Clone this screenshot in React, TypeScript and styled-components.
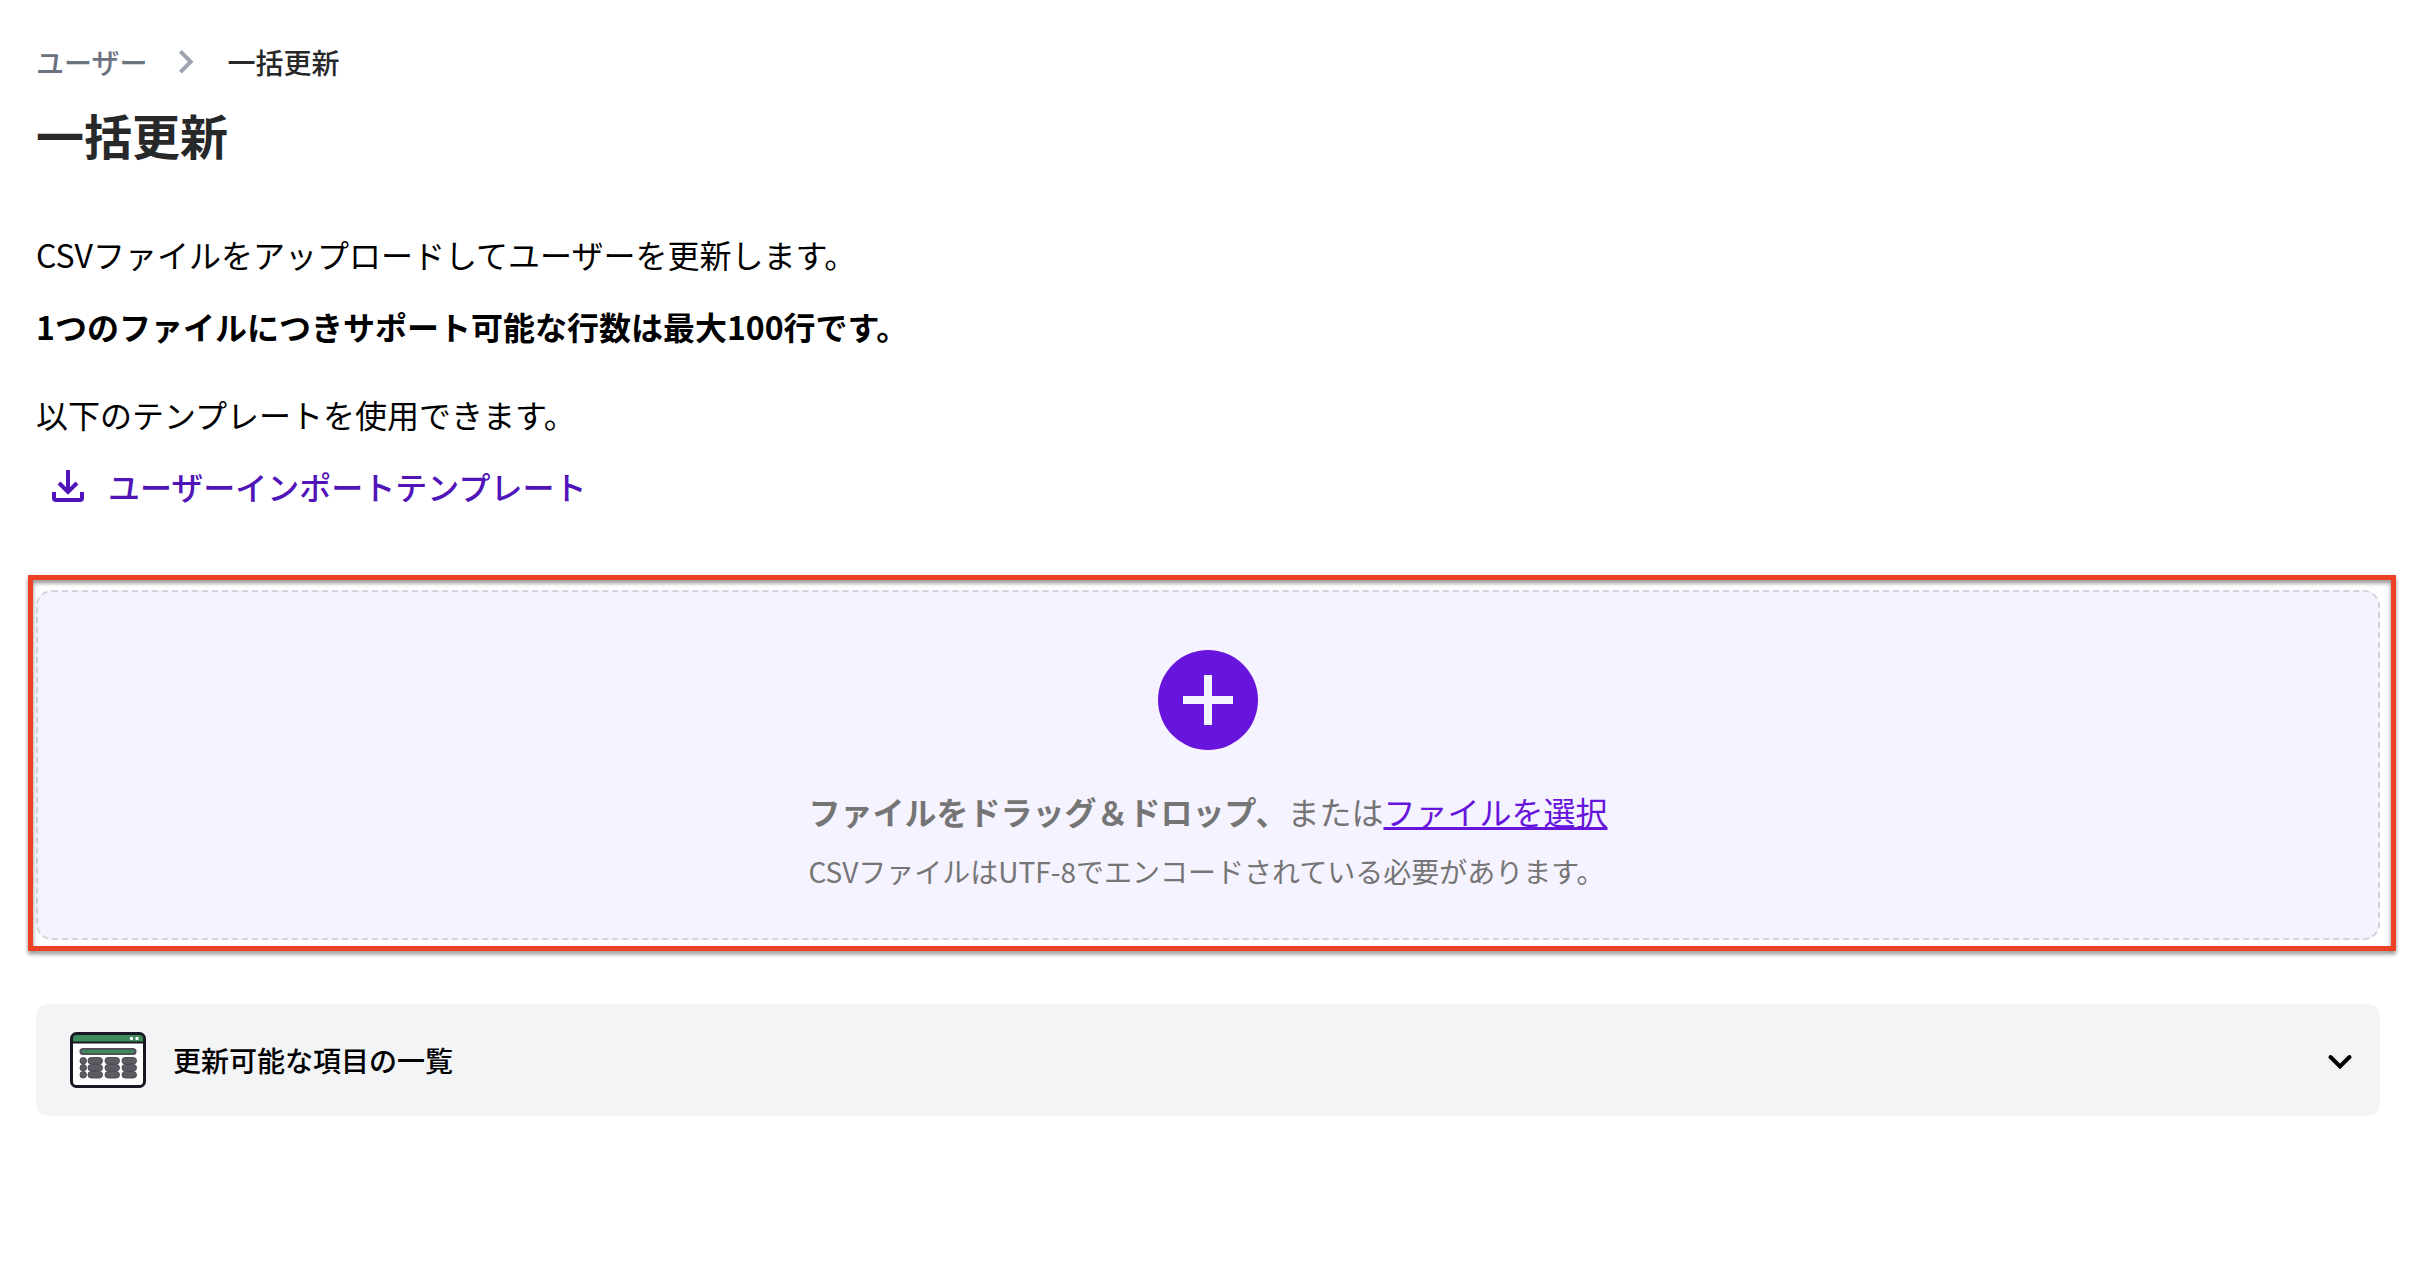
import React, { useState } from "react";
import styled, { createGlobalStyle } from "styled-components";

const GlobalStyle = createGlobalStyle`
  *, *::before, *::after { box-sizing: border-box; }
  body {
    margin: 0;
    background: #ffffff;
    color: #000000;
    font-family: "Noto Sans CJK JP", "Noto Sans", sans-serif;
    font-size: 32px;
    line-height: 48px;
  }
  h1, p, ol { margin: 0; padding: 0; }
`;

const Page = styled.main`
  display: flex;
  flex-direction: column;
  padding: 42px 38px 80px 36px;
`;

const Breadcrumbs = styled.ol`
  display: flex;
  align-items: center;
  list-style: none;
  font-size: 28px;
  line-height: 40px;
  font-weight: 500;
`;

const Crumb = styled.li`
  display: flex;
  align-items: center;
`;

const CrumbLink = styled.a`
  color: #6b7280;
  text-decoration: none;
`;

const CrumbCurrent = styled.span`
  color: #27282a;
`;

const CrumbChevron = styled.svg`
  width: 40px;
  height: 40px;
  margin: 0 20px;
  fill: none;
  stroke: #9ca3af;
  stroke-width: 4;
`;

const Title = styled.h1`
  margin-top: 20px;
  color: #27282a;
  font-size: 48px;
  line-height: 64px;
  font-weight: 700;
`;

const Intro = styled.section`
  display: flex;
  flex-direction: column;
  align-items: flex-start;
  gap: 24px;
  margin-top: 64px;
`;

const Limit = styled.p`
  margin-bottom: 16px;
  font-weight: 700;
`;

const TemplateLink = styled.a`
  display: flex;
  align-items: center;
  gap: 24px;
  padding-left: 16px;
  color: #5014b8;
  font-weight: 500;
  text-decoration: none;
`;

const DownloadIcon = styled.svg`
  width: 32px;
  height: 32px;
  fill: none;
  stroke: currentColor;
  stroke-width: 4;
`;

const UploadArea = styled.section`
  position: relative;
  margin-top: 80px;
`;

const Highlight = styled.div`
  position: absolute;
  inset: -15px -16px -11px -8px;
  border: 5px solid #ec4124;
  filter: drop-shadow(0 3px 2px rgba(0, 0, 0, 0.45));
  pointer-events: none;
`;

const DropZone = styled.div`
  display: flex;
  flex-direction: column;
  align-items: center;
  gap: 37px;
  padding: 58px 32px 47px;
  border: 2px dashed #d1d5db;
  border-radius: 16px;
  background: #f5f3ff;
  color: #757575;
`;

const PlusIcon = styled.svg`
  display: block;
  width: 100px;
  height: 100px;
`;

const DropText = styled.div`
  display: flex;
  flex-direction: column;
  gap: 16px;
`;

const FileInput = styled.input`
  display: none;
`;

const FileLabel = styled.label`
  color: #6714dc;
  text-decoration: underline;
  cursor: pointer;
`;

const Hint = styled.p`
  font-size: 28px;
  line-height: 40px;
`;

const Accordion = styled.button`
  display: flex;
  align-items: center;
  gap: 27px;
  width: 100%;
  min-height: 112px;
  margin-top: 64px;
  padding: 28px 26px 28px 34px;
  border: 0;
  border-radius: 12px;
  background: #f3f4f6;
  color: #000000;
  font: inherit;
  font-size: 28px;
  line-height: 40px;
  font-weight: 500;
  text-align: left;
  cursor: pointer;
`;

const AccordionLabel = styled.span`
  flex: 1;
`;

const TableIcon = styled.svg`
  width: 76px;
  height: 56px;
`;

const AccordionChevron = styled.svg<{ $open: boolean }>`
  width: 28px;
  height: 28px;
  fill: none;
  stroke: currentColor;
  stroke-width: 4;
  stroke-linecap: round;
  transform: rotate(${(p) => (p.$open ? 180 : 0)}deg);
`;

const columns = [
  { x: 10, width: 7 },
  { x: 18, width: 15 },
  { x: 35, width: 15 },
  { x: 52, width: 15 },
];
const rows = [25.5, 32.5, 39.5];

export default function App() {
  const [open, setOpen] = useState(false);
  return (
    <>
      <GlobalStyle />
      <Page>
        <nav>
          <Breadcrumbs>
            <Crumb>
              <CrumbLink href="#users">ユーザー</CrumbLink>
            </Crumb>
            <Crumb>
              <CrumbChevron viewBox="0 0 40 40" aria-hidden="true">
                <path d="M13.4 9.4L23.6 19.8L13.4 30.2" />
              </CrumbChevron>
              <CrumbCurrent aria-current="page">一括更新</CrumbCurrent>
            </Crumb>
          </Breadcrumbs>
        </nav>
        <Title>一括更新</Title>
        <Intro>
          <p>CSVファイルをアップロードしてユーザーを更新します。</p>
          <Limit>1つのファイルにつきサポート可能な行数は最大100行です。</Limit>
          <p>以下のテンプレートを使用できます。</p>
          <TemplateLink href="#template">
            <DownloadIcon viewBox="0 0 32 32" aria-hidden="true">
              <path d="M16 0v22M7 13l9 9 9-9M2 22v6q0 2 2 2h24q2 0 2-2v-6" />
            </DownloadIcon>
            ユーザーインポートテンプレート
          </TemplateLink>
        </Intro>
        <UploadArea>
          <DropZone>
            <PlusIcon viewBox="0 0 100 100" aria-hidden="true">
              <circle cx="50" cy="50" r="50" fill="#6714dc" />
              <path d="M50 25v50M25 50h50" stroke="#f5f3ff" strokeWidth="8" />
            </PlusIcon>
            <DropText>
              <p>
                <strong>ファイルをドラッグ＆ドロップ、</strong>または
                <FileLabel htmlFor="csv-file">ファイルを選択</FileLabel>
                <FileInput id="csv-file" type="file" accept=".csv" />
              </p>
              <Hint>CSVファイルはUTF-8でエンコードされている必要があります。</Hint>
            </DropText>
          </DropZone>
          <Highlight />
        </UploadArea>
        <Accordion type="button" aria-expanded={open} onClick={() => setOpen(!open)}>
          <TableIcon viewBox="0 0 76 56" aria-hidden="true">
            <rect x="1.5" y="1.5" width="73" height="53" rx="5" fill="#ffffff" />
            <path d="M2 10V6q0-4 4-4h64q4 0 4 4v4z" fill="#3d8b5a" />
            <path d="M2 10.5h72" stroke="#191923" strokeWidth="2" />
            <rect x="1.5" y="1.5" width="73" height="53" rx="5" fill="none" stroke="#191923" strokeWidth="3" />
            <circle cx="61.5" cy="6.5" r="1.7" fill="#ffffff" />
            <circle cx="67" cy="6.5" r="1.7" fill="#ffffff" />
            <rect x="10.5" y="17" width="55" height="5" rx="2.5" fill="#3d8b5a" stroke="#514f58" strokeWidth="2" />
            {rows.map((y) =>
              columns.map((c) => (
                <rect
                  key={`${c.x}-${y}`}
                  x={c.x}
                  y={y}
                  width={c.width - 0.5}
                  height="6.5"
                  rx="3.2"
                  fill="#5d5b63"
                  stroke="#4d4b54"
                  strokeWidth="1"
                />
              ))
            )}
          </TableIcon>
          <AccordionLabel>更新可能な項目の一覧</AccordionLabel>
          <AccordionChevron viewBox="0 0 28 28" $open={open} aria-hidden="true">
            <path d="M4.5 11l9.5 9.5 9.5-9.5" />
          </AccordionChevron>
        </Accordion>
      </Page>
    </>
  );
}
